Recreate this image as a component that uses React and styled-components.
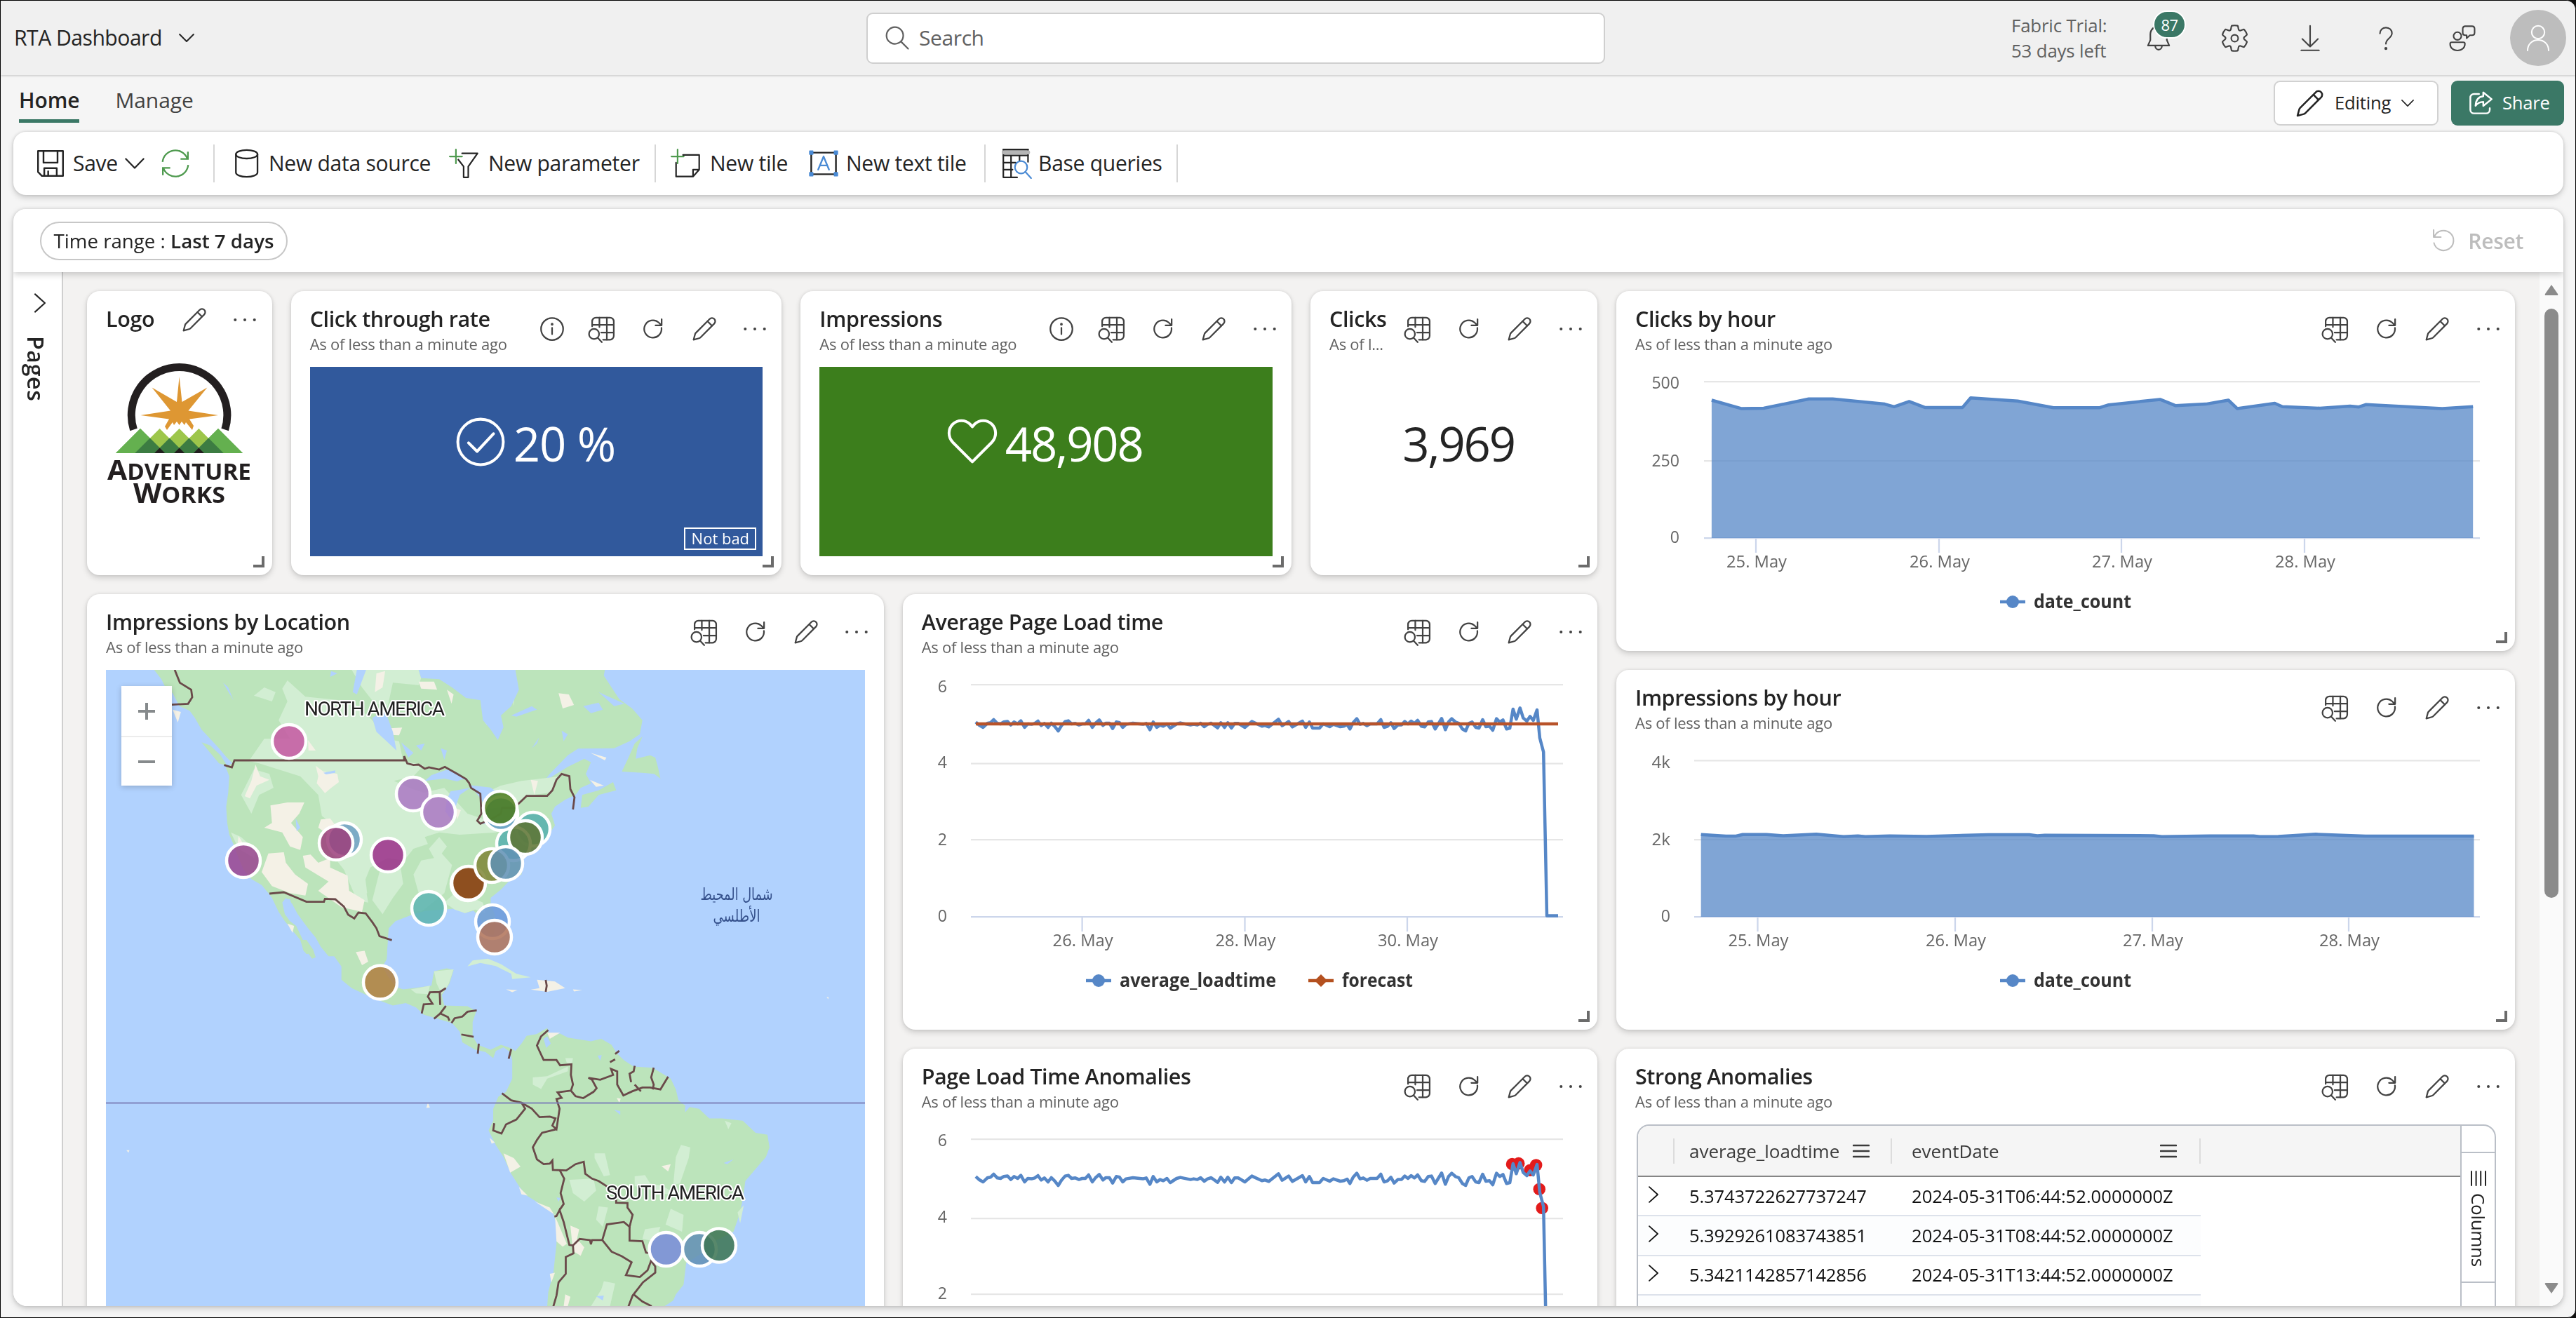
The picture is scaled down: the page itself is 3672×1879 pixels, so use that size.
import React from "react";
import styled, { createGlobalStyle, css } from "styled-components";

const GREEN = "#3b7866";
const BLUE = "#5687c7";

const GlobalStyle = createGlobalStyle`
  * { box-sizing: border-box; }
  html, body { margin: 0; padding: 0; background: #111; }
  body { font-family: "Open Sans", "Noto Sans", sans-serif; color: #242424; overflow: hidden; }
`;

/* ---------- shell ---------- */
const Window = styled.div`
  width: 3672px; height: 1879px; display: flex; flex-direction: column;
  border: 1px solid #000; border-radius: 0 14px 12px 0; background: #f5f5f5; overflow: hidden;
`;
const Header = styled.header`
  flex: none; height: 106px; display: flex; align-items: center; position: relative;
  background: #f0f0f0; box-shadow: 0 1px 3px rgba(0, 0, 0, 0.2);
`;
const AppName = styled.div`
  width: 1234px; flex: none; display: flex; align-items: center; gap: 24px; padding-left: 19px;
  font-size: 30.2px; letter-spacing: -0.55px; line-height: 42px;
`;
const SearchBox = styled.div`
  width: 1053px; height: 73px; flex: none; display: flex; align-items: center; gap: 13px;
  padding-left: 24px; background: #fff; border: 2px solid #cfcfcf; border-radius: 9px;
  font-size: 30px; letter-spacing: -0.4px; line-height: 42px; color: #616161;
`;
const Trial = styled.div`
  margin-left: 579px; width: 171px; flex: none; font-size: 25.8px; letter-spacing: -0.15px; line-height: 36px;
  color: #616161; white-space: nowrap;
`;
const HeaderActions = styled.div`
  display: flex; align-items: center; margin-left: -15px; color: #424242;
`;
const HeaderButton = styled.div`
  position: relative; width: 108px; height: 80px; display: flex; align-items: center; justify-content: center;
`;
const Badge = styled.span`
  position: absolute; left: 46px; top: 1px; width: 47px; height: 40px; border-radius: 20px;
  border: 2px solid #fff; background: ${GREEN}; color: #fff; font-size: 22px; font-weight: 500; letter-spacing: -0.5px;
  display: flex; align-items: center; justify-content: center;
`;
const Avatar = styled.div`
  width: 80px; height: 80px; margin-left: 15px; border-radius: 50%; background: #bdbdbd; color: #fff;
  display: flex; align-items: center; justify-content: center;
`;

const TabRow = styled.nav`
  flex: none; height: 81px; display: flex; align-items: flex-start; padding: 0 16px 0 26px;
`;
const Tab = styled.div`
  height: 68px; padding-top: 15px; margin-right: 51px; font-size: 30px; letter-spacing: -0.1px; line-height: 42px;
  color: ${(p) => (p.$active ? "#242424" : "#424242")}; font-weight: ${(p) => (p.$active ? 600 : 400)};
  border-bottom: 5px solid ${(p) => (p.$active ? GREEN : "transparent")};
`;
const Spacer = styled.div`flex: 1;`;
const ActionButton = styled.div`
  height: 64px; margin-top: 8px; display: flex; align-items: center; border-radius: 9px;
  font-size: 25.6px; letter-spacing: -0.2px; line-height: 36px;
  ${(p) => p.$primary
    ? css`width: 161px; padding-left: 24px; gap: 13px; background: ${GREEN}; color: #fff;`
    : css`width: 235px; padding-left: 29px; gap: 15px; margin-right: 18px; background: #fff; border: 2px solid #d1d1d1;`}
`;

const Toolbar = styled.div`
  flex: none; height: 90px; margin: 0 17px 0 18px; padding-left: 33px; display: flex; align-items: center;
  background: #fff; border-radius: 18px; font-size: 30.1px; letter-spacing: -0.3px; line-height: 42px;
  box-shadow: 0 4px 9px rgba(0, 0, 0, 0.16), 0 0 4px rgba(0, 0, 0, 0.14);
`;
const ToolItem = styled.div`
  display: flex; align-items: center; gap: ${(p) => p.$gap || 12}px; width: ${(p) => p.$w}px; flex: none; white-space: nowrap;
`;
const Divider = styled.div`
  width: 2px; height: 54px; background: #d6d6d6; margin-right: ${(p) => p.$mr || 0}px;
`;

const Board = styled.section`
  flex: none; height: 1564px; margin: 20px 17px 0 18px; display: flex; flex-direction: column;
  background: #fff; border-radius: 18px 18px 20px 20px; overflow: hidden;
`;
const BoardShadow = styled.div`
  border-radius: 18px; filter: drop-shadow(0 3px 5px rgba(0, 0, 0, 0.18)) drop-shadow(0 0 2px rgba(0, 0, 0, 0.12));
`;
const FilterBar = styled.div`
  flex: none; height: 90px; display: flex; align-items: center; padding: 0 57px 0 38px; position: relative;
  background: #fff; box-shadow: 0 3px 9px rgba(0, 0, 0, 0.2);
`;
const Pill = styled.div`
  height: 55px; width: 353px; display: flex; align-items: center; justify-content: center; border: 2px solid #c7c7c7; border-radius: 28px;
  font-size: 27.7px; line-height: 38px; white-space: pre;
  b { font-weight: 600; }
`;
const Reset = styled.div`
  display: flex; align-items: center; gap: 17px; margin-left: auto; color: #bdbdbd; font-size: 30px; letter-spacing: -0.3px; font-weight: 600;
`;
const BoardBody = styled.div`flex: 1; min-height: 0; display: flex;`;
const PagesRail = styled.aside`
  width: 71px; flex: none; display: flex; flex-direction: column; align-items: center; padding-top: 30px; gap: 33px;
  border-right: 2px solid #cfcfcf; background: #fff;
  svg { margin-left: 6px; }
`;
const VerticalText = styled.div`
  writing-mode: vertical-rl; font-size: ${(p) => p.$size}px; font-weight: ${(p) => p.$weight || 400};
  line-height: ${(p) => p.$lh}px; letter-spacing: ${(p) => p.$ls || 0}px;
  margin-right: ${(p) => p.$mr || 0}px;
`;
const Canvas = styled.div`
  flex: 1; overflow: hidden; background: #f3f2f1; padding: 27px 35px 0 34px;
`;
const Grid = styled.div`
  display: grid; width: 3461px; grid-template-columns: repeat(24, 1fr); grid-auto-rows: 81px; gap: 27px;
`;
const ScrollTrack = styled.div`
  width: 34px; flex: none; background: #fafafa; display: flex; flex-direction: column; align-items: center; padding-top: 18px;
`;
const Thumb = styled.div`
  width: 20px; height: 840px; border-radius: 10px; background: #8b8b8b; margin: 18px 0 548px;
`;

/* ---------- tiles ---------- */
const TileBox = styled.article`
  grid-column: ${(p) => p.$col}; grid-row: ${(p) => p.$row}; position: relative; display: flex; flex-direction: column;
  background: #fff; border-radius: 18px; padding: 0 27px 27px;
  box-shadow: 0 4px 8px rgba(0, 0, 0, 0.15), 0 0 4px rgba(0, 0, 0, 0.1);
`;
const TileHead = styled.header`
  height: 108px; flex: none; display: flex; justify-content: space-between; padding-top: 19px;
`;
const TileTitles = styled.div`min-width: 0; white-space: nowrap;`;
const TileTitle = styled.h2`
  margin: -1px 0 1px; font-size: 30.5px; line-height: 42px; font-weight: 600; letter-spacing: -0.4px;
`;
const TileSub = styled.div`
  font-size: 22px; line-height: 29px; color: #616161; letter-spacing: -0.25px;
`;
const TileActions = styled.div`
  flex: none; display: flex; height: 45px; margin: ${(p) => (p.$compact ? -1 : 12)}px -25px 0 0; color: #424242;
`;
const TileAction = styled.span`width: 72.4px; display: flex; align-items: center; justify-content: center;`;
const ResizeMark = styled.span`
  position: absolute; right: 11px; bottom: 11px; width: 16px; height: 16px;
  border: solid #6b6b6b; border-width: 0 4px 4px 0;
`;
const Stat = styled.div`
  flex: 1; position: relative; display: flex; justify-content: center; gap: 11px; padding-top: 61px;
  padding-left: ${(p) => p.$left || 0}px; padding-right: ${(p) => p.$right || 0}px;
  background: ${(p) => p.$bg || "#fff"}; color: ${(p) => (p.$bg ? "#fff" : "#242424")};
  font-size: 67px; line-height: 96px; letter-spacing: ${(p) => p.$ls || -2.2}px;
`;
const StatIcon = styled.span`display: flex; align-items: center; height: 92px;`;
const StatTag = styled.span`
  position: absolute; right: 9px; bottom: 9px; width: 103px; height: 32px; border: 2px solid #fff;
  font-size: 22px; line-height: 27px; letter-spacing: 0; text-align: center;
`;
const Drawing = styled.svg`display: block; flex: none; overflow: visible;`;
const MapFrame = styled.div`position: relative; height: 1000px; background: #b1d2fe; overflow: hidden;`;
const ZoomControl = styled.div`
  position: absolute; left: 22px; top: 23px; width: 72px; display: flex; flex-direction: column;
  background: #fff; color: #868a8c; box-shadow: 0 2px 8px rgba(0, 0, 0, 0.2);
  span { height: 71px; display: flex; align-items: center; justify-content: center; }
  span + span { border-top: 2px solid #ececec; }
`;

/* ---------- table ---------- */
const TableFrame = styled.div`
  display: flex; height: 420px; margin: 0 0 0 2px; width: 1225px; border: 2px solid #babfc7; border-radius: 18px; overflow: hidden;
`;
const TableMain = styled.div`flex: 1;`;
const TableHead = styled.div`
  height: 73px; display: flex; align-items: center; background: #f5f5f5; border-bottom: 2px solid #858585;
  font-size: 26px; font-weight: 500; color: #3a3a3a;
`;
const HeadCell = styled.div`
  width: ${(p) => p.$w}px; height: 36px; display: flex; align-items: center; justify-content: space-between;
  padding: 0 ${(p) => p.$pr || 0}px 0 ${(p) => p.$pl || 0}px; border-right: 2px solid #dcdcdc;
`;
const Row = styled.div`
  height: 56.25px; width: 802px; display: flex; align-items: center; border-bottom: 2px solid #dde2eb;
  background: ${(p) => (p.$alt ? "#fcfdfe" : "#fff")}; color: #111; font-size: 25.6px;
`;
const Cell = styled.div`
  width: ${(p) => p.$w}px; padding-left: ${(p) => p.$pl}px; white-space: nowrap; letter-spacing: ${(p) => p.$ls || 0}px;
`;
const SideBar = styled.div`
  width: 49px; flex: none; border-left: 2px solid #babfc7; display: flex; flex-direction: column; padding-top: 37px;
`;
const SideTab = styled.div`
  height: 187px; border: solid #babfc7; border-width: 2px 0; display: flex; flex-direction: column; align-items: center;
  padding-top: 24px; gap: 9px; color: #222;
`;

/* ---------- icons ---------- */
const Ico = ({ s = 36, vb = 16, w = 1, children }) => (
  <svg width={s} height={s} viewBox={`0 0 ${vb} ${vb}`} fill="none" stroke="currentColor" strokeWidth={w}
    strokeLinecap="round" strokeLinejoin="round">{children}</svg>
);
const Pencil = ({ s = 36 }) => (
  <Ico s={s}><path d="M14.3 1.7a2.05 2.05 0 0 0-2.9 0L2.7 10.4c-.3.3-.5.6-.6 1L1.2 14.8l3.4-.9c.4-.1.7-.3 1-.6l8.7-8.7a2.05 2.05 0 0 0 0-2.9zM10 3.1L12.9 6" /></Ico>
);
const Info = () => (
  <Ico><circle cx="8" cy="8" r="7" /><path d="M8 7.3v4" /><circle cx="8" cy="5" r=".35" fill="currentColor" /></Ico>
);
const TableSearch = () => (
  <Ico s={45} vb={20}>
    <path d="M3.6 8.6V5.4a2.4 2.4 0 0 1 2.4-2.4h8.9a2.4 2.4 0 0 1 2.4 2.4v9.2a2.4 2.4 0 0 1-2.4 2.4h-4.4" />
    <path d="M3.6 7.6h13.7M9.3 12.5h8M8.2 3v6M12.9 3v14" />
    <circle cx="4.8" cy="13.4" r="3.2" /><path d="M7.1 15.8l2.6 2.8" />
  </Ico>
);
const Refresh = () => (
  <Ico><path d="M13.300 7.300a5.500 5.500 0 1 1-1.800-3.400l1.400 1.300M13.400 1.800v3.900H9.500" /></Ico>
);
const Dots = () => (
  <Ico><g fill="currentColor" stroke="none"><circle cx="1.9" cy="8" r=".9" /><circle cx="8" cy="8" r=".9" /><circle cx="14.1" cy="8" r=".9" /></g></Ico>
);
const Chevron = ({ s = 22, w = 0.9 }) => <Ico s={s} vb={10} w={w}><path d="M.5 2.700L5 7.300l4.500-4.600" /></Ico>;
const ChevronR = ({ s = 28, w = 0.9 }) => <Ico s={s} vb={12} w={w}><path d="M3 .6L9 6l-6 5.400" /></Ico>;
const Burger = () => <Ico s={24} vb={12} w={1.3}><path d="M0.500 2h11M0.500 6h11M0.500 10h11" /></Ico>;

const icons = { info: Info, table: TableSearch, refresh: Refresh, edit: Pencil, more: Dots };

const Tile = ({ col, row, title, sub = true, actions = ["table", "refresh", "edit", "more"], children }) => (
  <TileBox $col={col} $row={row}>
    <TileHead>
      <TileTitles>
        <TileTitle>{title}</TileTitle>
        {sub && <TileSub>{sub === true ? "As of less than a minute ago" : sub}</TileSub>}
      </TileTitles>
      <TileActions $compact={!sub}>
        {actions.map((a) => { const I = icons[a]; return <TileAction key={a}><I /></TileAction>; })}
      </TileActions>
    </TileHead>
    {children}
    <ResizeMark />
  </TileBox>
);

/* ---------- charts ---------- */
const project = (pts, ox, oy, sx, sy) =>
  pts.trim().split(/\s+/).map((p) => { const [x, y] = p.split(",").map(Number); return [ox + x * sx, oy + y * sy]; });
const toPath = (pts) => "M" + pts.map(([x, y]) => `${x.toFixed(1)} ${y.toFixed(1)}`).join("L");

const Axes = ({ x1, x2, rows, ticks, labelX, tickY }) => (
  <g fontSize="24.5" fill="#666">
    {rows.map(([label, y, by]) => (
      <g key={label}>
        <line x1={x1} x2={x2} y1={y} y2={y} stroke={label === "0" ? "#ccd6eb" : "#e6e6e6"} strokeWidth="2.25" />
        <text x={labelX} y={by} textAnchor="end" textLength={label.length * 13.2} lengthAdjust="spacingAndGlyphs">{label}</text>
      </g>
    ))}
    {ticks.map(([label, x]) => (
      <g key={label}>
        <line x1={x} x2={x} y1={tickY} y2={tickY + 21} stroke="#ccd6eb" strokeWidth="2.25" />
        <text x={x + 1} y={tickY + 42} textAnchor="middle" textLength="86" lengthAdjust="spacingAndGlyphs">{label}</text>
      </g>
    ))}
  </g>
);
const Legend = ({ x, y, label, length, color = BLUE, diamond }) => (
  <g>
    <line x1={x} x2={x + 36} y1={y} y2={y} stroke={color} strokeWidth="4.5" />
    {diamond ? <path d={`M${x + 18} ${y - 9}l9 9l-9 9l-9-9z`} fill={color} /> : <circle cx={x + 18} cy={y} r="9" fill={color} />}
    <text x={x + 48} y={y + 9} fontSize="26.5" fontWeight="700" fill="#333" textLength={length} lengthAdjust="spacingAndGlyphs">{label}</text>
  </g>
);

const clicks = project("190,515 237,547 273,546 345,510 383,510 466,530 481,540 505,520 530,543 590,543 603,506 678,518 735,544 808,544 823,533 905,512 930,536 978,530 1014,515 1028,547 1088,527 1100,540 1160,546 1208,538 1222,541 1233,532 1355,547 1404,540", 2270, 380, 0.894, 0.37);
const impressions = project("163,725 203,732 218,732 230,725 268,725 295,730 348,724 392,734 415,731 427,734 466,731 525,733 625,726 690,726 703,730 715,728 890,730 903,734 980,731 1050,731 1060,734 1090,733 1150,724 1230,732 1404,732", 2280, 940, 0.8878, 0.3444);
const load = project("184,622 192,636 200,645 209,628 216,625 223,612 231,628 238,630 245,622 253,620 260,635 267,622 275,630 282,617 290,645 297,630 305,632 312,628 319,618 326,637 333,628 341,645 348,627 355,640 363,660 370,638 378,620 385,617 392,630 400,628 408,635 415,630 422,630 429,615 437,645 444,627 452,613 460,637 466,627 474,627 481,650 489,622 496,625 503,645 510,632 525,627 547,632 554,628 562,655 569,622 577,645 584,635 591,640 599,630 606,648 620,630 628,626 650,635 657,632 665,635 672,627 680,642 687,632 695,627 709,647 716,625 724,645 731,625 739,648 746,628 754,628 768,645 783,620 805,640 812,637 820,643 841,610 849,638 863,620 871,643 893,618 900,645 908,622 915,648 930,648 938,630 952,642 960,632 975,642 983,640 990,633 996,652 1003,625 1011,608 1018,632 1025,628 1033,638 1040,630 1055,630 1063,612 1070,645 1078,640 1085,625 1092,650 1100,635 1108,635 1115,620 1122,630 1129,618 1136,628 1143,615 1151,640 1158,643 1166,622 1173,620 1181,652 1195,607 1203,655 1210,622 1217,608 1225,622 1232,627 1240,652 1247,660 1254,628 1261,622 1269,645 1276,648 1284,612 1291,642 1299,640 1306,657 1314,608 1321,622 1328,613 1336,652 1343,648 1350,567 1357,610 1365,562 1372,605 1380,618 1387,598 1394,615 1402,570 1408,690 1416,750", 1270, 1470, 0.6569, 0.3333);
const anomalies = project("1348,569 1362,566 1387,595 1400,573 1407,676 1413,757", 1270, 1470, 0.6569, 0.3333);

const AreaChart = ({ view, base, pts, axes, legend }) => {
  const [, , w, h] = view;
  return (
    <Drawing width={w} height={h} viewBox={view.join(" ")}>
      <Axes {...axes} />
      <path d={`${toPath(pts)}L${pts[pts.length - 1][0]} ${base}L${pts[0][0]} ${base}Z`} fill={BLUE} fillOpacity="0.75" />
      <path d={toPath(pts)} fill="none" stroke={BLUE} strokeWidth="4.500" strokeLinejoin="round" />
      <Legend {...legend} />
    </Drawing>
  );
};

/* ---------- map ---------- */
const P = ({ d, ...p }) => <polygon points={d} {...p} />;
const L = ({ d }) => <polyline points={d} vectorEffect="non-scaling-stroke" />;
const pins = [
  [412, 1057, "#c557a2"], [589, 1132, "#ab78c4"], [625, 1158, "#ab78c4"], [491, 1197, "#6f9fc4"], [479, 1202, "#9c3f7c"],
  [553, 1219, "#9c2f8a"], [347, 1227, "#9a4590"], [760, 1182, "#56b0ad"], [732, 1203, "#56b0ad"], [749, 1194, "#5d7332"],
  [714, 1160, "#5f9cc4"], [713, 1152, "#4c7c1c"], [667, 1260, "#a05a2a"], [668, 1259, "#8a4a1a"], [701, 1234, "#7f8637"], [721, 1231, "#5f90b4"],
  [611, 1295, "#5cb3b0"], [702, 1314, "#6c9ad8"], [705, 1336, "#b07258"], [542, 1400.500, "#b07f40"],
  [949.500, 1781, "#788cd8"], [997, 1781, "#628fb4"], [1025, 1775.500, "#3d7553"],
];

const WorldMap = () => (
  <Drawing width="1082" height="1000" viewBox="151 955 1082 1000">
    <g transform="translate(120 840) scale(.7334 .33333)" fill="#bce4bb">
      <P d="136,345 150,385 158,420 172,445 185,500 205,520 215,550 228,600 245,640 262,680 275,715 288,745 275,760 282,800 280,870 276,930 278,1000 282,1050 290,1090 300,1150 310,1200 325,1240 345,1265 358,1300 365,1320 378,1380 390,1420 405,1460 420,1500 426,1545 432,1560 436,1560 425,1500 412,1440 400,1420 390,1390 385,1340 392,1320 404,1345 415,1390 435,1450 450,1490 460,1530 475,1570 588,1570 590,1500 592,1450 605,1420 640,1390 665,1375 700,1370 725,1365 740,1385 757,1375 765,1395 775,1430 785,1470 795,1480 800,1440 798,1390 790,1350 790,1320 810,1285 825,1250 850,1220 855,1150 870,1110 885,1080 900,1060 915,1010 908,960 915,930 935,900 955,880 965,850 985,830 975,790 985,740 972,725 940,760 910,800 885,845 905,790 940,710 960,682 1030,680 1060,650 1080,620 1085,560 1065,510 1040,470 1025,420 1010,370 1012,345" />
      <P d="965,935 968,880 1000,860 1028,825 1034,860 1000,880 980,930" />
      <P d="1085,630 1075,680 1072,725 1100,710 1110,720 1115,760 1120,810 1108,790 1085,785 1045,780 1058,720 1070,660" />
      <P d="228,655 245,668 265,710 278,755 262,745 245,700" />
      <g fill="#d2eed3">
        <P d="385,425 395,390 430,460 520,480 560,560 585,640 612,650 620,735 660,752 640,800 602,820 632,850 660,870 700,850 745,960 800,1000 830,1010 800,1040 730,1050 690,1040 662,1060 668,1090 640,1110 622,1160 590,1150 556,1190 545,1250 552,1340 530,1330 505,1200 480,1130 500,1060 480,1000 462,970 455,880 420,800 340,745 320,735 350,640 400,640 378,560 395,480" />
        <P d="520,345 650,345 655,380 650,410 600,400 590,500 565,490 540,420" />
        <P d="690,1060 705,1100 695,1130 715,1180 700,1300 655,1380 640,1370 650,1300 640,1220 655,1160 680,1150 670,1110" />
        <P d="720,1370 700,1340 725,1290 775,1340 780,1385 760,1370 740,1385" />
        <P d="330,770 360,790 368,850 340,880 325,960 305,880" />
        <P d="810,840 850,820 925,800 905,870 860,884 830,930 775,940 770,880" />
        <P d="330,455 350,420 372,440 365,480" /><P d="820,345 835,500 838,345" />
        <P d="575,1200 615,1190 620,1260 600,1320 580,1390 560,1330" />
        <P d="515,1200 545,1210 550,1300 530,1320" />
        <P d="285,1040 305,1060 335,1120 330,1150 300,1110" />
      </g>
      <g fill="#f4f1e6">
        <P d="333,750 342,800 360,815 335,840 322,895 312,885 325,820" />
        <P d="450,755 465,780 492,790 495,825 480,850 468,872 452,830 455,800" />
        <P d="362,925 395,912 428,912 418,960 402,1000 425,1060 420,1115 400,1100 385,1040 350,1020 365,1000" />
        <P d="460,985 478,980 490,1015 475,1050 455,1020" />
        <P d="358,1130 388,1125 392,1170 410,1220 435,1260 430,1310 400,1300 365,1270 345,1210" />
        <P d="425,1140 440,1135 455,1170 478,1150 478,1190 512,1225 515,1290 545,1330 540,1380 500,1360 455,1290 475,1250 430,1190" />
        <P d="568,360 585,350 580,420 565,440" /><P d="650,395 680,395 686,430 655,425" /><P d="922,445 942,450 952,495 930,510" />
        <P d="705,430 718,450 714,490" /><P d="570,598 618,592 612,625 580,622" /><P d="868,815 882,820 875,880" />
        <P d="984,700 1015,720 1012,732" /><P d="983,815 1010,840 995,845" /><P d="777,560 790,565 782,580" />
        <P d="172,515 188,525 182,570" /><P d="395,1430 408,1440 405,1470" /><P d="720,935 732,945 725,985" />
        <P d="300,1055 308,1085 298,1090" /><P d="435,645 450,690 436,690" />
      </g>
      <g fill="#b1d2fe">
        <P d="650,345 655,380 690,385 715,420 742,465 770,475 775,560 790,600 804,645 815,590 810,540 830,500 845,430 838,345" />
        <P d="662,820 675,795 705,772 722,780 748,818 735,812 725,822 700,810 680,815" />
        <P d="712,865 750,850 730,880 722,930 718,1000 702,950 705,900" />
        <P d="748,838 790,848 812,885 780,940 772,900 758,860" /><P d="768,1005 800,975 822,965 800,1000" />
        <P d="560,550 585,520 600,610 607,690 590,655 568,610" /><P d="530,345 548,345 530,450 522,440" />
        <P d="480,350 492,360 478,375" /><P d="270,400 280,420 290,475" /><P d="830,540 870,500 880,515 840,545" />
        <P d="970,500 1000,485 1008,515 985,530" /><P d="928,605 940,620 932,650" /><P d="870,680 884,635 880,660" />
        <P d="616,655 640,700 630,720" /><P d="465,785 488,775 488,785 470,792" /><P d="411,980 420,1020 413,1035" />
        <P d="645,668 662,660 655,690" /><P d="693,680 705,690 700,730" /><P d="1000,440 1050,490 1030,500" />
        <P d="392,1325 400,1325 412,1420 430,1470 440,1520 430,1500 405,1400" />
      </g>
      <g fill="none" stroke="#6a4a4a" strokeWidth="2.800">
        <L d="272,752 287,762 292,732 622,732 622,714 628,745 640,752 650,750 662,768 670,762 690,771 701,760 725,790 742,812 748,828 752,850 770,875 772,960 764,990 770,1003 790,985 810,960 812,935 836,935 860,884 900,884 910,860 918,815 928,790 943,800 945,855 953,890 950,942" />
        <L d="176,345 186,400 208,430 210,462 202,490 170,494" />
        <L d="360,1302 388,1296 432,1337 466,1337 468,1324 488,1326 505,1358 513,1392 525,1408 533,1383 547,1386 560,1424 568,1450 574,1484 598,1501" />
      </g>
    </g>
    <g transform="translate(120 1340) scale(.7334 .34375)" fill="#bce4bb">
      <P d="421,0 430,40 443,78 450,72 445,40 432,0" />
      <P d="458,0 480,50 500,110 500,165 520,200 560,240 600,272 625,262 645,280 660,310 700,335 715,345 730,380 735,425 760,455 780,465 795,490 800,460 815,445 828,465 832,500 832,575 820,630 805,650 795,700 795,750 786,790 800,850 815,900 830,970 845,1020 860,1060 890,1100 912,1135 918,1180 918,1260 912,1380 902,1460 900,1519 898,1700 1080,1700 1128,1519 1145,1495 1150,1470 1165,1430 1170,1340 1200,1300 1225,1250 1262,1210 1275,1130 1282,1050 1285,1000 1305,950 1325,900 1332,860 1328,808 1305,800 1280,750 1240,740 1215,740 1195,700 1170,690 1155,665 1150,620 1140,575 1105,530 1068,525 1050,500 1035,470 1025,435 1005,410 985,420 940,405 925,388 905,400 900,365 880,390 860,398 850,430 838,460 828,448 810,435 790,455 765,435 755,400 755,340 762,295 745,275 700,272 695,230 710,180 718,125 705,118 680,130 675,190 640,200 620,205 605,195 590,150 580,110 588,80 590,0" />
      <g fill="#d2eed3">
        <P d="745,110 755,85 785,78 810,100 840,140 868,155 832,162 830,140 800,108 770,95" />
        <P d="680,130 718,122 708,185 695,225 685,180" /><P d="635,205 672,190 668,225 645,222" />
        <P d="872,570 900,565 940,525 940,545 900,575 888,618 872,600" /><P d="935,490 950,490 948,515 938,510" />
        <P d="992,885 1012,885 1022,975 1010,980 992,905" /><P d="1160,850 1178,860 1175,905 1158,1010 1145,1015 1150,900" />
        <P d="943,995 990,990 995,1040 972,1085 950,1050" /><P d="1070,980 1090,975 1100,1010 1125,1020 1160,1070 1070,1020" />
        <P d="1000,1105 1018,1110 1008,1190 995,1160" /><P d="1140,1115 1165,1140 1162,1210 1130,1180" />
        <P d="1090,1200 1120,1190 1110,1250 1085,1240" /><P d="1010,1415 1032,1425 1022,1519 985,1519 1005,1450" />
        <P d="1245,750 1258,760 1252,785" /><P d="1270,1130 1282,1100 1275,1175" />
      </g>
      <g fill="#f4f1e6">
        <P d="880,165 915,172 935,200 900,215 868,206 885,200" /><P d="820,205 842,208 832,217" /><P d="950,205 968,208 952,214" />
        <P d="528,50 545,45 552,90 540,105" /><P d="815,885 835,905 848,940 828,965" /><P d="845,1025 862,1060 850,1055" />
        <P d="876,1085 905,1110 915,1145 938,1260 930,1272 918,1250 915,1140" /><P d="945,1185 962,1200 958,1240 972,1275 965,1310 950,1290" />
        <P d="1122,938 1140,930 1135,960" /><P d="788,820 798,840 792,845" /><P d="900,385 925,385 905,410" />
        <P d="905,1385 915,1380 908,1420" /><P d="935,1470 945,1480 940,1519 932,1519" /><P d="1035,655 1043,658 1040,675" />
        <P d="82,872 88,872 86,882" /><P d="668,675 672,695 665,697" /><P d="1443,237 1447,237 1446,246" />
      </g>
      <g fill="#b1d2fe">
        <P d="893,410 900,400 907,430 898,448" /><P d="1168,690 1180,685 1168,715" /><P d="1243,925 1262,910 1250,930" />
        <P d="1030,705 1042,710 1042,725" /><P d="998,480 1006,478 1003,500" /><P d="995,1478 1010,1475 1008,1495" /><P d="918,1068 926,1070 922,1085" />
      </g>
      <g fill="none" stroke="#6a4a4a" strokeWidth="2.800">
        <L d="902,374 888,400 880,438 888,475 893,498 918,498 925,520 947,516 946,560 950,600 946,625 920,632 928,655 918,660 924,700 918,785 910,770 916,740 905,733 885,735 870,700 850,675 830,665 812,636" />
        <L d="946,625 955,648 970,656 990,630 996,615 987,580 980,572 1003,580 1028,560 1024,535 1036,545 1036,600 1048,645 1065,628 1075,620 1085,612 1100,612 1120,620 1135,567" />
        <L d="1070,522 1068,545 1060,555 1063,590" /><L d="1107,530 1102,570 1107,600 1105,620" /><L d="1070,600 1082,628" />
        <L d="1022,507 1032,495" /><L d="1032,473 1040,460" />
        <L d="850,675 857,700 840,745 820,765 811,803 795,790 797,760" />
        <L d="918,785 890,800 880,830 872,860 880,910 893,930 905,928 910,915 911,954 937,956 955,930 971,920 974,970 987,990 1000,1000 1016,1022 1034,1060 1034,1090 1056,1091 1056,1110 1066,1140 1060,1190 1049,1170 1016,1180 1007,1245 987,1245 985,1262 983,1245 963,1240 950,1267 943,1265 932,1170 924,1120 918,1145 914,1147" />
        <L d="924,954 933,990 926,1050 932,1095 924,1120" />
        <L d="950,1267 951,1300 936,1315 936,1385 922,1420 918,1475 912,1519 912,1600" />
        <L d="1060,1190 1060,1247 1085,1250 1092,1297 1102,1300" />
        <L d="1007,1245 1025,1293 1045,1312 1064,1337 1053,1390 1080,1398 1095,1370 1102,1330 1110,1355 1110,1380 1086,1420 1066,1475 1058,1519 1058,1600" />
        <L d="1068,1470 1085,1500 1103,1519" />
        <L d="656,305 660,267 677,265 668,235 672,217 691,216 703,200" /><L d="691,216 692,270" />
        <L d="680,327 692,305 707,320 710,335" /><L d="692,305 703,274" />
        <L d="714,345 720,325 735,318 745,298 763,292" /><L d="733,392 757,402" /><L d="767,430 765,472" /><L d="830,453 825,493" />
        <L d="897,166 899,190 897,215" />
      </g>
    </g>
    <rect x="151" y="1571" width="1082" height="3" fill="#7c7fb8" fillOpacity="0.6" />
    {pins.map(([x, y, c], i) => <circle key={i} cx={x} cy={y} r="24" fill={c} fillOpacity="0.86" stroke="#fff" strokeWidth="4.500" />)}
    <g fontFamily="Roboto, sans-serif" fontSize="28" fill="#222" stroke="#fff" strokeWidth="4" paintOrder="stroke" strokeLinejoin="round">
      <text x="434" y="1020" textLength="200">NORTH AMERICA</text>
      <text x="864" y="1710" textLength="197">SOUTH AMERICA</text>
    </g>
    <g fontFamily="DejaVu Sans, sans-serif" fontSize="24" fill="#35518c" textAnchor="middle">
      <text x="1050" y="1283" textLength="103" lengthAdjust="spacingAndGlyphs">شمال المحيط</text>
      <text x="1050" y="1314" textLength="67" lengthAdjust="spacingAndGlyphs">الأطلسي</text>
    </g>
  </Drawing>
);

/* ---------- logo ---------- */
const Logo = () => (
  <Drawing width="209" height="200" viewBox="151 523 209 200">
    <path d="M190.500 612.500A68.300 68.300 0 1 1 320.700 612.500" fill="none" stroke="#231f20" strokeWidth="11" />
    <path fill="#de9733" d="M255.600 537L259.500 573L295.400 552.600L268.500 585.500L311 592L270 597.500L276 607L274 613L265 602L263 606L259 601L255.600 606L252 601L248 606L246 602L238 613L235 608L241 597.500L200.500 592L243 585.500L216.600 552.600L252 573Z" />
    {[[200, "#64b04f"], [311, "#64b04f"], [227.600, "#9dc64b"], [283.400, "#9dc64b"], [255.600, "#9dc64b"]].map(([x, c]) => (
      <path key={x} d={`M${x} 611l35 35h-70z`} fill={c} />
    ))}
    {[[200, 1], [311, -1]].map(([x, s]) => (
      <path key={x} d={`M${x} 611l${13.800 * s} 13.700l${-21.300 * s} 21.300h${-27.500 * s}z`} fill="#64b04f" />
    ))}
    {[213.800, 241.600, 269.500, 297.200].map((x) => <path key={x} d={`M${x} 624.500l21.500 21.500h-43z`} fill="#3c7c42" />)}
    {[227.600, 255.600, 283.400].map((x) => <path key={x} d={`M${x} 638.500l7.500 7.500h-15z`} fill="#231f20" />)}
    <g fontWeight="700" fill="#231f20">
      <text x="153" y="683.500" fontSize="40" textLength="205" lengthAdjust="spacingAndGlyphs">A<tspan fontSize="32.500">DVENTURE</tspan></text>
      <text x="190" y="717" fontSize="40" textLength="131" lengthAdjust="spacingAndGlyphs">W<tspan fontSize="32.500">ORKS</tspan></text>
    </g>
  </Drawing>
);

const dates = ["2024-05-31T06:44:52.0000000Z", "2024-05-31T08:44:52.0000000Z", "2024-05-31T13:44:52.0000000Z"];
const loads = ["5.3743722627737247", "5.3929261083743851", "5.3421142857142856"];

export default function App() {
  return (
    <>
      <GlobalStyle />
      <Window>
        <Header>
          <AppName>RTA Dashboard <Chevron /></AppName>
          <SearchBox>
            <Ico s={36}><circle cx="6.500" cy="6.500" r="5.300" /><path d="M10.400 10.400l4.500 4.500" /></Ico>
            Search
          </SearchBox>
          <Trial>Fabric Trial:<br />53 days left</Trial>
          <HeaderActions>
            <HeaderButton>
              <Ico s={42} vb={20} w={1.050}><path d="M10 2a5.600 5.600 0 0 0-5.600 5.600v3.900L2.800 15.200h14.400l-1.600-3.700V7.600A5.600 5.600 0 0 0 10 2zM7.700 15.500c.1 1.500 1.100 2.500 2.300 2.500s2.200-1 2.300-2.500" /></Ico>
              <Badge>87</Badge>
            </HeaderButton>
            <HeaderButton>
              <Ico s={43} vb={20}>
                <path d="M1.911 7.383a8.491 8.491 0 0 1 1.780-3.080.5.5 0 0 1 .540-.135l1.918.686a1 1 0 0 0 1.320-.762l.366-2.006a.5.5 0 0 1 .388-.400 8.532 8.532 0 0 1 3.554 0 .5.5 0 0 1 .388.400l.366 2.006a1 1 0 0 0 1.320.762l1.919-.686a.5.5 0 0 1 .540.136 8.491 8.491 0 0 1 1.780 3.079.5.5 0 0 1-.153.535l-1.555 1.320a1 1 0 0 0 0 1.524l1.555 1.320a.5.5 0 0 1 .152.535 8.491 8.491 0 0 1-1.780 3.080.5.5 0 0 1-.540.135l-1.918-.686a1 1 0 0 0-1.320.762l-.366 2.007a.5.5 0 0 1-.388.399 8.532 8.532 0 0 1-3.554 0 .5.5 0 0 1-.388-.400l-.366-2.006a1 1 0 0 0-1.320-.762l-1.918.686a.5.5 0 0 1-.540-.136 8.491 8.491 0 0 1-1.780-3.079.5.5 0 0 1 .152-.535l1.555-1.320a1 1 0 0 0 0-1.524l-1.555-1.320a.5.5 0 0 1-.152-.535z" />
                <circle cx="10" cy="10" r="2.300" />
              </Ico>
            </HeaderButton>
            <HeaderButton><Ico s={40} vb={18} w={0.950}><path d="M9 1.300v13M4 9.700L9 14.600 14 9.700M3.300 17h11.400" /></Ico></HeaderButton>
            <HeaderButton><Ico s={40} vb={18} w={0.950}><path d="M5.200 6.200C5.200 3.900 6.800 2.400 9 2.400s3.900 1.500 3.900 3.600c0 3.300-3.900 3.400-3.900 6.800" /><circle cx="9" cy="15.800" r=".5" fill="currentColor" /></Ico></HeaderButton>
            <HeaderButton><Ico s={40} vb={18} w={0.950}><circle cx="6.300" cy="7.800" r="2.500" /><path d="M2.700 11.800h7.300c.7 0 1.100.4 1.100 1 0 2.500-1.900 4.300-4.800 4.300s-4.700-1.800-4.700-4.300c0-.6.400-1 1.100-1zM9.700 3.200c0-1 .7-1.700 1.700-1.700h4.200c1 0 1.700.7 1.700 1.700v2.400c0 1-.7 1.700-1.700 1.700h-1.300L12.200 9.200V7.300h-.8c-1 0-1.700-.7-1.700-1.700z" /></Ico></HeaderButton>
          </HeaderActions>
          <Avatar><Ico s={40} vb={20}><circle cx="10" cy="6" r="4.600" /><path d="M2.500 19c0-4.500 3.300-7.500 7.500-7.500s7.500 3 7.500 7.500" /></Ico></Avatar>
        </Header>

        <TabRow>
          <Tab $active>Home</Tab>
          <Tab>Manage</Tab>
          <Spacer />
          <ActionButton><Pencil s={41} />Editing <Chevron s={18} /></ActionButton>
          <ActionButton $primary>
            <Ico s={36} w={1.100}><path d="M7 2.200H3.800A2.300 2.300 0 0 0 1.500 4.500v7.700a2.300 2.300 0 0 0 2.300 2.300h7.700a2.300 2.300 0 0 0 2.300-2.300v-1M9.700 1.200v2.500C6.700 4 5 6 4.800 9.700c1.300-1.800 2.700-2.500 4.900-2.500v2.600l5.300-4.300z" /></Ico>
            Share
          </ActionButton>
        </TabRow>

        <Toolbar>
          <ToolItem $w={126}>
            <Ico s={40} vb={18} w={1.100}><path d="M1 1h16v16H3.500L1 14.500zM4.500 1v7.500h9V1M5 17v-5h8v5M7.500 14v3" /></Ico>Save
          </ToolItem>
          <ToolItem $w={51}><Chevron s={28} w={0.8} /></ToolItem>
          <ToolItem $w={75}>
            <svg width="42" height="42" viewBox="0 0 20 20" fill="none" stroke="#4f9a4f" strokeWidth="1.100"><path d="M1.300 9A8.700 8.700 0 0 1 18 6.500M18.700 11A8.700 8.700 0 0 1 2 13.500M18.500 2v5h-5M1.500 18v-5h5" /></svg>
          </ToolItem>
          <Divider $mr={27} />
          <ToolItem $w={307} $gap={8}><Ico s={42} vb={18} w={1}><ellipse cx="8" cy="3.400" rx="6.600" ry="2.600" /><path d="M1.400 3.400v11.200c0 1.400 3 2.600 6.600 2.600s6.600-1.200 6.600-2.600V3.400" /></Ico>New data source</ToolItem>
          <ToolItem $w={293} $gap={12}>
            <Ico s={44} vb={20} w={1}><path d="M8.500 3.500h10L12.500 12v7H9.500v-7L6 7.500" /><path d="M4.500 1v9M0.500 5.500h8" stroke="#4f9a4f" /></Ico>New parameter
          </ToolItem>
          <Divider $mr={21} />
          <ToolItem $w={196} $gap={12}>
            <Ico s={44} vb={20} w={1}><path d="M8 4.500h10.500v9.500l-4 4.500H3.500v-9M18.500 14h-4v4.500" /><path d="M4.500 1v9M0.500 5.500h8" stroke="#4f9a4f" /></Ico>New tile
          </ToolItem>
          <ToolItem $w={251} $gap={10}>
            <Ico s={44} vb={20} w={1.100}><rect x="2" y="3" width="16" height="14" /><g stroke="#4a8ad4"><path d="M6.500 14L10 5.500l3.500 8.500M7.700 11.300h4.600" /><path fill="#4a8ad4" d="M1 2h2v2H1zM17 2h2v2h-2zM1 16h2v2H1zM17 16h2v2h-2z" strokeWidth=".8" /></g></Ico>New text tile
          </ToolItem>
          <Divider $mr={23} />
          <ToolItem $w={249} $gap={8}>
            <Ico s={44} vb={20} w={1}><path d="M17 9V1H1v18h9" /><path d="M1 2.800h16" strokeWidth="2.600" stroke="#b5b5b5" /><path d="M1 1h16M1 4.800h16M1 9.500h8M1 14h6M6 5v14M11.500 5v3" /><g stroke="#4a8ad4"><circle cx="12.500" cy="12.500" r="4" fill="#fff" /><path d="M15.300 15.500L19 19.500" /></g></Ico>Base queries
          </ToolItem>
          <Divider />
        </Toolbar>

        <BoardShadow>
          <Board>
            <FilterBar>
              <Pill>Time range : <b>Last 7 days</b></Pill>
              <Reset>
                <Ico s={36} w={0.9}><path d="M1.800 1.200v4.600h4.600M2.300 5.500A6.300 6.300 0 1 1 2 9.500" /></Ico>
                Reset
              </Reset>
            </FilterBar>
            <BoardBody>
              <PagesRail>
                <ChevronR />
                <VerticalText $size={32} $weight={600} $lh={42} $ls={0.7} $mr={5}>Pages</VerticalText>
              </PagesRail>
              <Canvas>
                <Grid>
                  <Tile col="1 / span 2" row="1 / span 4" title="Logo" sub={false} actions={["edit", "more"]}>
                    <Logo />
                  </Tile>
                  <Tile col="3 / span 5" row="1 / span 4" title="Click through rate" actions={["info", "table", "refresh", "edit", "more"]}>
                    <Stat $bg="#31599c" $ls={-1} $right={3}>
                      <StatIcon><Ico s={72} w={0.900}><circle cx="8" cy="8" r="7.200" /><path d="M4.200 8.300l2.700 2.700 5.200-5.600" /></Ico></StatIcon>
                      20 %
                      <StatTag>Not bad</StatTag>
                    </Stat>
                  </Tile>
                  <Tile col="8 / span 5" row="1 / span 4" title="Impressions" actions={["info", "table", "refresh", "edit", "more"]}>
                    <Stat $bg="#3c7e1c" $right={4}>
                      <StatIcon><Ico s={72} w={0.900}><path d="M8 14.300L1.800 8.100C.2 6.400.3 3.900 1.800 2.400s4-1.500 5.500 0l.7.8.7-.8c1.500-1.500 4-1.500 5.500 0s1.600 4 0 5.700z" /></Ico></StatIcon>
                      48,908
                    </Stat>
                  </Tile>
                  <Tile col="13 / span 3" row="1 / span 4" title="Clicks" sub="As of l...">
                    <Stat $left={13}>3,969</Stat>
                  </Tile>
                  <Tile col="16 / span 9" row="1 / span 5" title="Clicks by hour">
                    <AreaChart view={[2331, 523, 1227, 378]} base={767} pts={clicks}
                      axes={{ x1: 2429, x2: 3535, labelX: 2394, tickY: 767, rows: [["500", 544, 554], ["250", 657, 665], ["0", 767, 774]], ticks: [["25. May", 2503], ["26. May", 2764], ["27. May", 3024], ["28. May", 3285]] }}
                      legend={{ x: 2851, y: 858, label: "date_count", length: 139 }} />
                  </Tile>
                  <Tile col="1 / span 8" row="5 / span 12" title="Impressions by Location">
                    <MapFrame>
                      <WorldMap />
                      <ZoomControl>
                        <span><Ico s={28} vb={14} w={2}><path d="M7 1v12M1 7h12" strokeLinecap="butt" /></Ico></span>
                        <span><Ico s={28} vb={14} w={2}><path d="M1 7h12" strokeLinecap="butt" /></Ico></span>
                      </ZoomControl>
                    </MapFrame>
                  </Tile>
                  <Tile col="9 / span 7" row="5 / span 6" title="Average Page Load time">
                    <Drawing width="936" height="486" viewBox="1314 955 936 486">
                      <Axes x1={1384} x2={2228} labelX={1350} tickY={1307}
                        rows={[["6", 976, 986.500], ["4", 1088.600, 1095], ["2", 1197, 1205], ["0", 1307, 1314]]}
                        ticks={[["26. May", 1542.600], ["28. May", 1774.500], ["30. May", 2006]]} />
                      <path d={`${toPath(load.map(([x, y]) => [x, y - 648]))}L2205 1305.500L2221 1305.500`} fill="none" stroke={BLUE} strokeWidth="4.500" strokeLinejoin="round" />
                      <path d="M1391 1032H2221" stroke="#b8532a" strokeWidth="4.500" />
                      <Legend x={1548} y={1398} label="average_loadtime" length={223} />
                      <Legend x={1865} y={1398} label="forecast" length={101} color="#b4501f" diamond />
                    </Drawing>
                  </Tile>
                  <Tile col="16 / span 9" row="6 / span 5" title="Impressions by hour">
                    <AreaChart view={[2331, 1063, 1227, 378]} base={1307} pts={impressions}
                      axes={{ x1: 2415, x2: 3535, labelX: 2381, tickY: 1307, rows: [["4k", 1084.300, 1095], ["2k", 1197, 1205], ["0", 1307, 1314]], ticks: [["25. May", 2505.500], ["26. May", 2787], ["27. May", 3068], ["28. May", 3348]] }}
                      legend={{ x: 2851, y: 1398, label: "date_count", length: 139 }} />
                  </Tile>
                  <Tile col="9 / span 7" row="11 / span 6" title="Page Load Time Anomalies">
                    <Drawing width="936" height="486" viewBox="1314 1603 936 486">
                      <Axes x1={1384} x2={2228} labelX={1350} tickY={1955}
                        rows={[["6", 1624, 1634], ["4", 1737, 1743], ["2", 1845, 1852]]} ticks={[]} />
                      {anomalies.map(([x, y]) => <circle key={x} cx={x} cy={y} r="8.800" fill="#e31b1b" />)}
                      <path d={`${toPath(load)}L2205 1953`} fill="none" stroke={BLUE} strokeWidth="4.500" strokeLinejoin="round" />
                    </Drawing>
                  </Tile>
                  <Tile col="16 / span 9" row="11 / span 6" title="Strong Anomalies">
                    <TableFrame>
                      <TableMain>
                        <TableHead>
                          <HeadCell $w={52} />
                          <HeadCell $w={310} $pl={21} $pr={30}>average_loadtime<Burger /></HeadCell>
                          <HeadCell $w={440} $pl={28} $pr={32}>eventDate<Burger /></HeadCell>
                        </TableHead>
                        {dates.map((d, i) => (
                          <Row key={d} $alt={i % 2 === 1}>
                            <Cell $w={52} $pl={10}><ChevronR s={24} /></Cell>
                            <Cell $w={310} $pl={21} $ls={-0.15}>{loads[i]}</Cell>
                            <Cell $w={440} $pl={28}>{d}</Cell>
                          </Row>
                        ))}
                        <Row $alt />
                      </TableMain>
                      <SideBar>
                        <SideTab>
                          <Ico s={24} vb={12}><path d="M1 1v10M4.300 1v10M7.600 1v10M11 1v10" /></Ico>
                          <VerticalText $size={26} $lh={34} $ls={-0.3}>Columns</VerticalText>
                        </SideTab>
                      </SideBar>
                    </TableFrame>
                  </Tile>
                </Grid>
              </Canvas>
              <ScrollTrack>
                <svg width="20" height="16" viewBox="0 0 20 16"><path d="M10 0L19 13q1 2-1 2H2q-2 0-1-2z" fill="#8b8b8b" /></svg>
                <Thumb />
                <svg width="20" height="16" viewBox="0 0 20 16"><path d="M10 16L19 3q1-2-1-2H2Q0 1 1 3z" fill="#8b8b8b" /></svg>
              </ScrollTrack>
            </BoardBody>
          </Board>
        </BoardShadow>
      </Window>
    </>
  );
}
